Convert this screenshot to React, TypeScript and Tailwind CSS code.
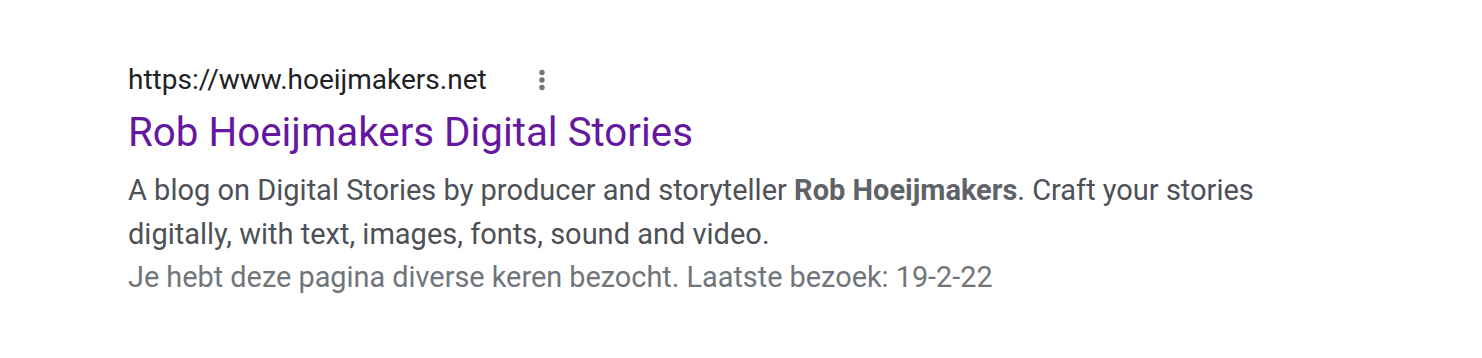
import React from "react";

const font = { fontFamily: "Roboto, Arial, sans-serif" };

const MoreIcon = () => (
  <svg width="10" height="24" viewBox="0 0 10 24" className="fill-[#70757a]">
    <circle cx="5" cy="4.5" r="2.7" />
    <circle cx="5" cy="12" r="2.7" />
    <circle cx="5" cy="19.5" r="2.7" />
  </svg>
);

export default function App() {
  return (
    <div className="min-h-screen bg-white pt-[64px] pl-[128px]" style={font}>
      <div className="w-[1145px]">
        <div className="flex items-center h-[32px]">
          <span className="text-[28px] leading-[32px] text-[#202124]">
            https://www.hoeijmakers.net
          </span>
          <span className="ml-[50px] flex items-center">
            <MoreIcon />
          </span>
        </div>
        <h3 className="mt-[11px] text-[40.3px] leading-[52px] text-[#64189f] font-normal">
          Rob Hoeijmakers Digital Stories
        </h3>
        <div className="mt-[9px] text-[29px] leading-[44px] text-[#4d5156]">
          A blog on Digital Stories by producer and storyteller{" "}
          <b className="font-bold text-[#5f6368]">Rob Hoeijmakers</b>. Craft your
          stories digitally, with text, images, fonts, sound and video.
        </div>
        <div className="text-[28.85px] leading-[42px] text-[#70757a]">
          Je hebt deze pagina diverse keren bezocht. Laatste bezoek: 19-2-22
        </div>
      </div>
    </div>
  );
}
